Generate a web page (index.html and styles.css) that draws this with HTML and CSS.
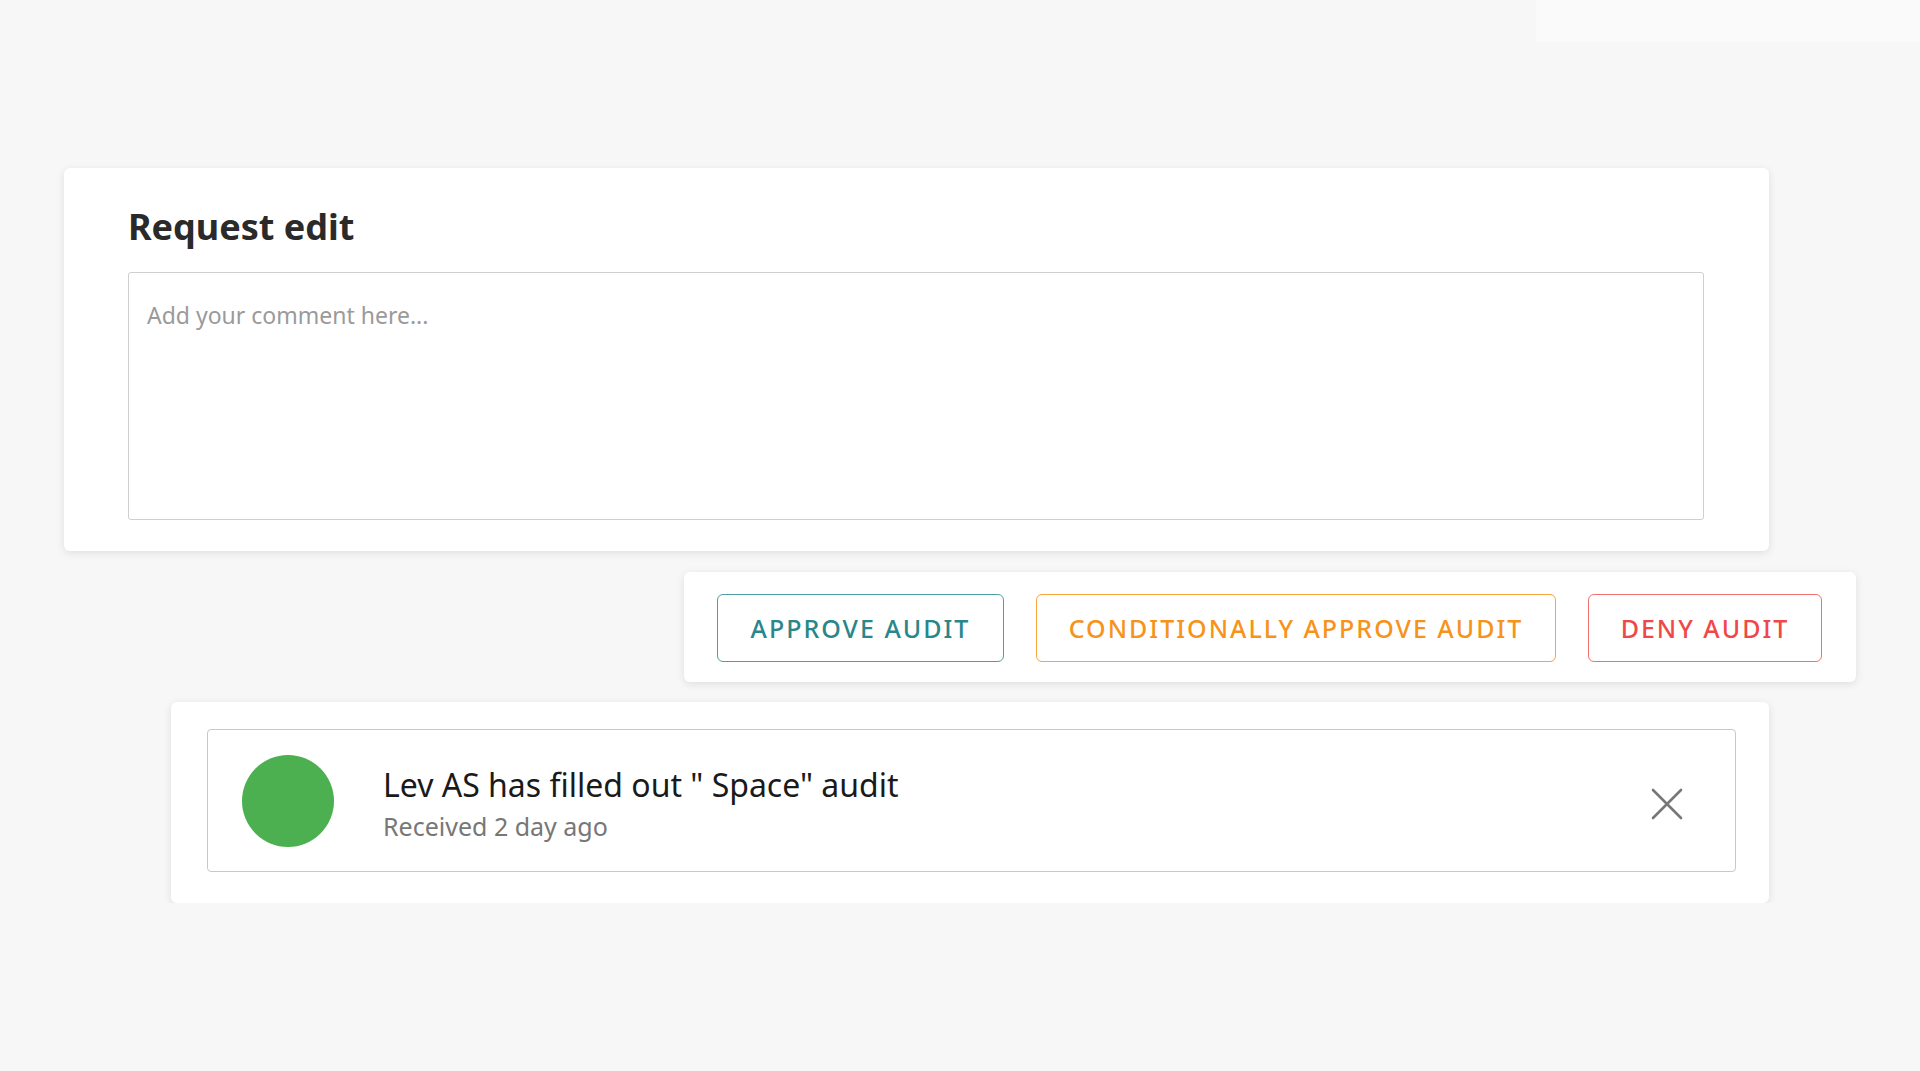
FILE: index.html
```html
<!DOCTYPE html>
<html lang="en">
<head>
<meta charset="utf-8">
<title>Request edit</title>
<link rel="stylesheet" href="styles.css">
</head>
<body>
<div class="topbar"><div class="topbar-block"></div></div>
<main class="page">
  <section class="card edit-card">
    <h2 class="edit-title">Request edit</h2>
    <textarea class="comment" placeholder="Add your comment here..."></textarea>
  </section>
  <section class="card actions">
    <button class="btn btn-approve">APPROVE AUDIT</button>
    <button class="btn btn-cond">CONDITIONALLY APPROVE AUDIT</button>
    <button class="btn btn-deny">DENY AUDIT</button>
  </section>
  <section class="card notif-card">
    <div class="notif">
      <div class="avatar"></div>
      <div class="notif-text">
        <div class="notif-title">Lev AS has filled out " Space" audit</div>
        <div class="notif-sub">Received 2 day ago</div>
      </div>
      <button class="close" aria-label="Close">
        <svg width="32" height="32" viewBox="0 0 32 32"><path d="M2 2 L30 30 M30 2 L2 30" stroke="#777" stroke-width="2.6" stroke-linecap="round" fill="none"/></svg>
      </button>
    </div>
  </section>
</main>
</body>
</html>
```

FILE: styles.css
```css
html, body {
  margin: 0;
  padding: 0;
  background: #f7f7f7;
  font-family: "Noto Sans", "Open Sans", sans-serif;
}

.topbar {
  display: flex;
  justify-content: flex-end;
  height: 42px;
}
.topbar-block {
  width: 384px;
  height: 42px;
  background: #fafafa;
}

.page {
  display: flex;
  flex-direction: column;
  align-items: flex-start;
  padding: 126px 0 0 64px;
  width: 1856px;
  box-sizing: border-box;
}

.card {
  background: #fff;
  border-radius: 6px;
  box-shadow: 0 2px 8px rgba(0, 0, 0, 0.1);
  box-sizing: border-box;
}

.edit-card {
  width: 1705px;
  height: 383px;
  padding: 0 65px 31px 64px;
  display: flex;
  flex-direction: column;
}

.edit-title {
  margin: 0;
  padding-top: 34px;
  height: 104px;
  box-sizing: border-box;
  font-size: 36px;
  line-height: 50px;
  font-weight: 700;
  color: #2a2a2a;
}

.comment {
  flex: 1;
  margin: 0;
  border: 1px solid #cfcfcf;
  border-radius: 3px;
  padding: 26px 18px 18px;
  font-family: "Noto Sans", sans-serif;
  font-size: 23px;
  line-height: 32px;
  color: #333;
  resize: none;
  outline: none;
}
.comment::placeholder {
  color: #9a9a9a;
}

.actions {
  align-self: flex-end;
  margin-top: 21px;
  width: 1172px;
  height: 110px;
  padding: 22px 34px 20px 33px;
  display: flex;
  gap: 32px;
}

.btn {
  height: 68px;
  background: #fff;
  border: 1.5px solid;
  border-radius: 6px;
  font-family: "Noto Sans", sans-serif;
  font-size: 25px;
  letter-spacing: 2px;
  font-weight: 500;
  padding: 0;
  cursor: pointer;
}
.btn-approve {
  width: 287px;
  color: #2a868a;
  border-color: #4f9ea1;
}
.btn-cond {
  width: 520px;
  color: #f7931a;
  border-color: #f9a43c;
}
.btn-deny {
  width: 234px;
  color: #f04848;
  border-color: #f27070;
}

.notif-card {
  margin-top: 20px;
  margin-left: 107px;
  width: 1598px;
  height: 201px;
  padding: 27px 33px 31px 36px;
}

.notif {
  height: 143px;
  border: 1px solid #c8c8c8;
  border-radius: 4px;
  box-sizing: border-box;
  display: flex;
  align-items: center;
  padding: 0 52px 0 34px;
}

.avatar {
  width: 92px;
  height: 92px;
  border-radius: 50%;
  background: #4caf50;
  flex-shrink: 0;
}

.notif-text {
  flex: 1;
  margin-left: 49px;
  display: flex;
  flex-direction: column;
  padding-top: 8px;
}
.notif-title {
  font-size: 32px;
  line-height: 42px;
  color: #1a1a1a;
}
.notif-sub {
  font-size: 25px;
  line-height: 40px;
  color: #777;
}

.close {
  width: 32px;
  height: 32px;
  margin-top: 6px;
  padding: 0;
  border: 0;
  background: transparent;
  display: flex;
}
```
